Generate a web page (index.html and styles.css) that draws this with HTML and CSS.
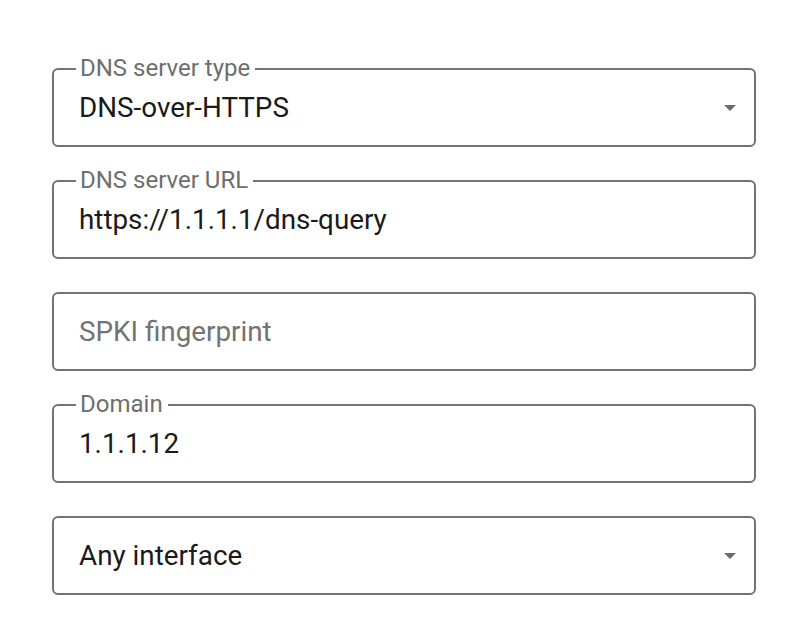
FILE: index.html
```html
<!DOCTYPE html>
<html>
<head>
<meta charset="utf-8">
<link rel="stylesheet" href="styles.css">
</head>
<body>
<div class="form">
  <div class="field">
    <span class="label">DNS server type</span>
    <span class="value">DNS-over-HTTPS</span>
    <svg class="arrow" width="12" height="6" viewBox="0 0 12 6"><path d="M0 0h12L6 6z"/></svg>
  </div>
  <div class="field">
    <span class="label">DNS server URL</span>
    <span class="value">https://1.1.1.1/dns-query</span>
  </div>
  <div class="field">
    <span class="value placeholder">SPKI fingerprint</span>
  </div>
  <div class="field">
    <span class="label">Domain</span>
    <span class="value">1.1.1.12</span>
  </div>
  <div class="field">
    <span class="value">Any interface</span>
    <svg class="arrow" width="12" height="6" viewBox="0 0 12 6"><path d="M0 0h12L6 6z"/></svg>
  </div>
</div>
</body>
</html>
```
FILE: styles.css
```css
html, body {
  margin: 0;
  background: #ffffff;
}
body {
  font-family: Roboto, "Noto Sans", sans-serif;
}
.form {
  display: flex;
  flex-direction: column;
  gap: 33px;
  padding: 68px 44px 0 52px;
  width: 704px;
}
.field {
  position: relative;
  box-sizing: border-box;
  height: 79px;
  border: 2px solid #737373;
  border-radius: 6px;
  display: flex;
  align-items: center;
  padding: 0 18px 0 25px;
}
.label {
  position: absolute;
  left: 22px;
  top: -15px;
  padding: 0 5px 0 4px;
  background: #ffffff;
  color: #6e6e6e;
  font-size: 24px;
  line-height: 26px;
}
.value {
  flex: 1;
  color: #1a1a1a;
  font-size: 27.8px;
  line-height: 32px;
}
.placeholder {
  color: #737373;
}
.arrow {
  fill: #6b6b6b;
}
```
